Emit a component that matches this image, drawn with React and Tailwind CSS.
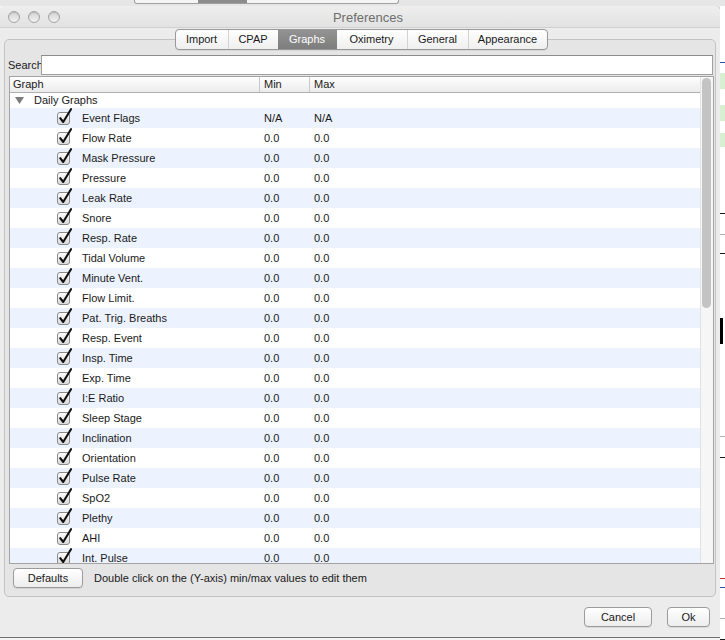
import React from 'react';

const font = { fontFamily: '"Liberation Sans", Arial, sans-serif' };

const graphs = [
  ['Event Flags', 'N/A', 'N/A'],
  ['Flow Rate', '0.0', '0.0'],
  ['Mask Pressure', '0.0', '0.0'],
  ['Pressure', '0.0', '0.0'],
  ['Leak Rate', '0.0', '0.0'],
  ['Snore', '0.0', '0.0'],
  ['Resp. Rate', '0.0', '0.0'],
  ['Tidal Volume', '0.0', '0.0'],
  ['Minute Vent.', '0.0', '0.0'],
  ['Flow Limit.', '0.0', '0.0'],
  ['Pat. Trig. Breaths', '0.0', '0.0'],
  ['Resp. Event', '0.0', '0.0'],
  ['Insp. Time', '0.0', '0.0'],
  ['Exp. Time', '0.0', '0.0'],
  ['I:E Ratio', '0.0', '0.0'],
  ['Sleep Stage', '0.0', '0.0'],
  ['Inclination', '0.0', '0.0'],
  ['Orientation', '0.0', '0.0'],
  ['Pulse Rate', '0.0', '0.0'],
  ['SpO2', '0.0', '0.0'],
  ['Plethy', '0.0', '0.0'],
  ['AHI', '0.0', '0.0'],
  ['Int. Pulse', '0.0', '0.0'],
];

const tabs = [
  ['Import', 'w-[52px]'],
  ['CPAP', 'w-[50px]'],
  ['Graphs', 'w-[59px]'],
  ['Oximetry', 'w-[70px]'],
  ['General', 'w-[61px]'],
  ['Appearance', 'w-[79px]'],
];

const Check = () => (
  <svg width="17" height="20" viewBox="0 0 17 20" className="shrink-0">
    <defs>
      <linearGradient id="cbg" x1="0" y1="0" x2="0" y2="1">
        <stop offset="0" stopColor="#ffffff" />
        <stop offset="1" stopColor="#d8d8d8" />
      </linearGradient>
    </defs>
    <rect x="1.5" y="4.5" width="12" height="12" rx="2.5" fill="url(#cbg)" stroke="#8a8a8a" />
    <path d="M4.2 10.2 L7.2 14 L15 1.2" fill="none" stroke="#111" strokeWidth="2.1" strokeLinecap="round" strokeLinejoin="round" />
  </svg>
);

const Light = () => (
  <div className="w-[12px] h-[12px] rounded-full border border-[#a5a5a5] bg-gradient-to-b from-[#d4d4d4] to-[#f2f2f2] shadow-[inset_0_1px_1px_rgba(0,0,0,0.15)]" />
);

const MacButton = ({ label, w }) => (
  <button className={`${w} h-[20px] rounded-[4px] border border-[#9b9b9b] bg-gradient-to-b from-white to-[#ededed] text-[11px] text-[#1a1a1a] shadow-[0_1px_0_rgba(0,0,0,0.08)]`}>
    {label}
  </button>
);

export default function App() {
  return (
    <div className="w-[725px] h-[640px] bg-[#f4f4f4] overflow-hidden flex flex-col" style={font}>
      {/* window behind */}
      <div className="h-[6px] shrink-0 bg-[#e6e6e6] flex">
        <div className="ml-[134px] w-[265px] h-[4px] border border-t-0 border-[#a0a0a0] rounded-b-[3px] bg-[#f5f5f5] flex">
          <div className="ml-[63px] w-[49px] bg-[#8c8c8c]" />
        </div>
      </div>

      <div className="flex flex-1">
        {/* Preferences window */}
        <div className="w-[720px] h-[632px] shrink-0 flex flex-col bg-[#ececec] rounded-t-[5px] border-b border-[#6f6f6f] shadow-[1px_0_0_#b8b8b8]">
          {/* title bar */}
          <div className="h-[22px] shrink-0 flex items-center rounded-t-[5px] bg-gradient-to-b from-[#eeeeee] to-[#e2e2e2] border-b border-[#cfcfcf]">
            <div className="flex gap-[8px] pl-[8px]">
              <Light />
              <Light />
              <Light />
            </div>
            <div className="flex-1 text-center text-[13px] text-[#6e6e6e] pr-[52px] pl-[8px] pt-[2px]">Preferences</div>
          </div>

          {/* tabs */}
          <div className="relative z-10 mt-[1px] flex justify-center pr-[1px]">
            <div className="ml-[3px] flex h-[21px] rounded-[4px] border border-[#989898] bg-gradient-to-b from-white to-[#efefef] overflow-hidden shadow-[0_1px_0_rgba(0,0,0,0.06)]">
              {tabs.map(([t, w], i) => (
                <div
                  key={t}
                  className={
                    t === 'Graphs'
                      ? `${w} flex items-center justify-center text-[11px] text-white bg-gradient-to-b from-[#939393] to-[#7d7d7d]`
                      : `${w} flex items-center justify-center text-[11px] text-[#1a1a1a] ${i > 0 && tabs[i - 1][0] !== 'Graphs' ? 'border-l border-[#d2d2d2]' : ''}`
                  }
                >
                  {t}
                </div>
              ))}
            </div>
          </div>

          {/* pane */}
          <div className="-mt-[11px] ml-[4px] w-[712px] h-[558px] shrink-0 flex flex-col rounded-[5px] border border-[#c3c3c3] bg-[#e5e5e5] pt-[15px] pl-[2px] pr-[2px]">
            <div className="flex items-center h-[20px]">
              <span className="text-[11px] text-[#1a1a1a] w-[34px] pl-[1px]">Search</span>
              <div className="flex-1 h-[20px] bg-white border border-[#a0a0a0] border-t-[#8c8c8c]" />
            </div>

            {/* table */}
            <div className="mt-[1px] ml-[2px] w-[705px] h-[488px] shrink-0 flex border border-[#a3a3a3] bg-white overflow-hidden">
              <div className="flex-1 flex flex-col overflow-hidden">
                <div className="h-[16px] shrink-0 flex items-center bg-gradient-to-b from-white to-[#ebebeb] border-b border-[#b0b0b0] text-[11px] text-[#1a1a1a]">
                  <div className="w-[249px] pl-[3px]">Graph</div>
                  <div className="w-[50px] h-full flex items-center pl-[4px] border-l border-[#c8c8c8]">Min</div>
                  <div className="flex-1 h-full flex items-center pl-[4px] border-l border-[#c8c8c8]">Max</div>
                </div>
                <div className="h-[15px] shrink-0 flex items-center text-[11px] text-[#1a1a1a]">
                  <svg width="9" height="7" viewBox="0 0 9 7" className="ml-[5px]">
                    <path d="M0 0 H9 L4.5 7 Z" fill="#7c7c7c" />
                  </svg>
                  <span className="ml-[10px]">Daily Graphs</span>
                </div>
                {graphs.map(([name, mn, mx], i) => (
                  <div
                    key={name}
                    className={`h-[20px] shrink-0 flex items-center text-[11px] text-[#1a1a1a] ${i % 2 === 0 ? 'bg-[#edf3fe]' : 'bg-white'}`}
                  >
                    <div className="w-[249px] flex items-center">
                      <div className="ml-[46px] h-[20px]">
                        <Check />
                      </div>
                      <span className="ml-[9px]">{name}</span>
                    </div>
                    <div className="w-[50px] pl-[5px]">{mn}</div>
                    <div className="flex-1 pl-[5px]">{mx}</div>
                  </div>
                ))}
              </div>
              {/* scrollbar */}
              <div className="w-[13px] shrink-0 bg-[#f6f6f6] border-l border-[#e2e2e2] pt-[1px] pl-[1px]">
                <div className="w-[9px] h-[230px] rounded-full bg-[#c3c3c3]" />
              </div>
            </div>

            <div className="mt-[4px] h-[20px] flex items-center">
              <div className="ml-[6px] flex">
                <MacButton label="Defaults" w="w-[70px]" />
              </div>
              <span className="ml-[11px] text-[11px] text-[#1a1a1a]">Double click on the (Y-axis) min/max values to edit them</span>
            </div>
          </div>

          {/* dialog buttons */}
          <div className="mt-[10px] flex justify-end gap-[15px] pr-[10px]">
            <MacButton label="Cancel" w="w-[68px]" />
            <MacButton label="Ok" w="w-[43px]" />
          </div>
        </div>

        {/* app behind, right edge */}
        <div className="flex-1 bg-white flex flex-col">
          <div className="mt-[56px] h-[1px] bg-[#2d4fa0]" />
          <div className="mt-[10px] h-[16px] bg-[#d8efd2]" />
          <div className="mt-[16px] h-[16px] bg-[#d8efd2]" />
          <div className="mt-[12px] h-[14px] bg-[#d8efd2]" />
          <div className="mt-[66px] h-[1px] bg-[#1a1a1a]" />
          <div className="mt-[20px] h-[1px] bg-[#b0b0b0]" />
          <div className="mt-[18px] h-[1px] bg-[#1a1a1a]" />
          <div className="mt-[64px] h-[26px] w-[3px] bg-black" />
          <div className="mt-[92px] h-[1px] bg-[#b0b0b0]" />
          <div className="mt-[20px] h-[1px] bg-[#1a1a1a]" />
          <div className="mt-[120px] h-[1px] bg-[#c03030]" />
          <div className="mt-[8px] h-[1px] bg-[#2d4fa0]" />
          <div className="mt-[30px] h-[1px] bg-[#b0b0b0]" />
          <div className="mt-[20px] h-[1px] bg-[#1a1a1a]" />
        </div>
      </div>
    </div>
  );
}
